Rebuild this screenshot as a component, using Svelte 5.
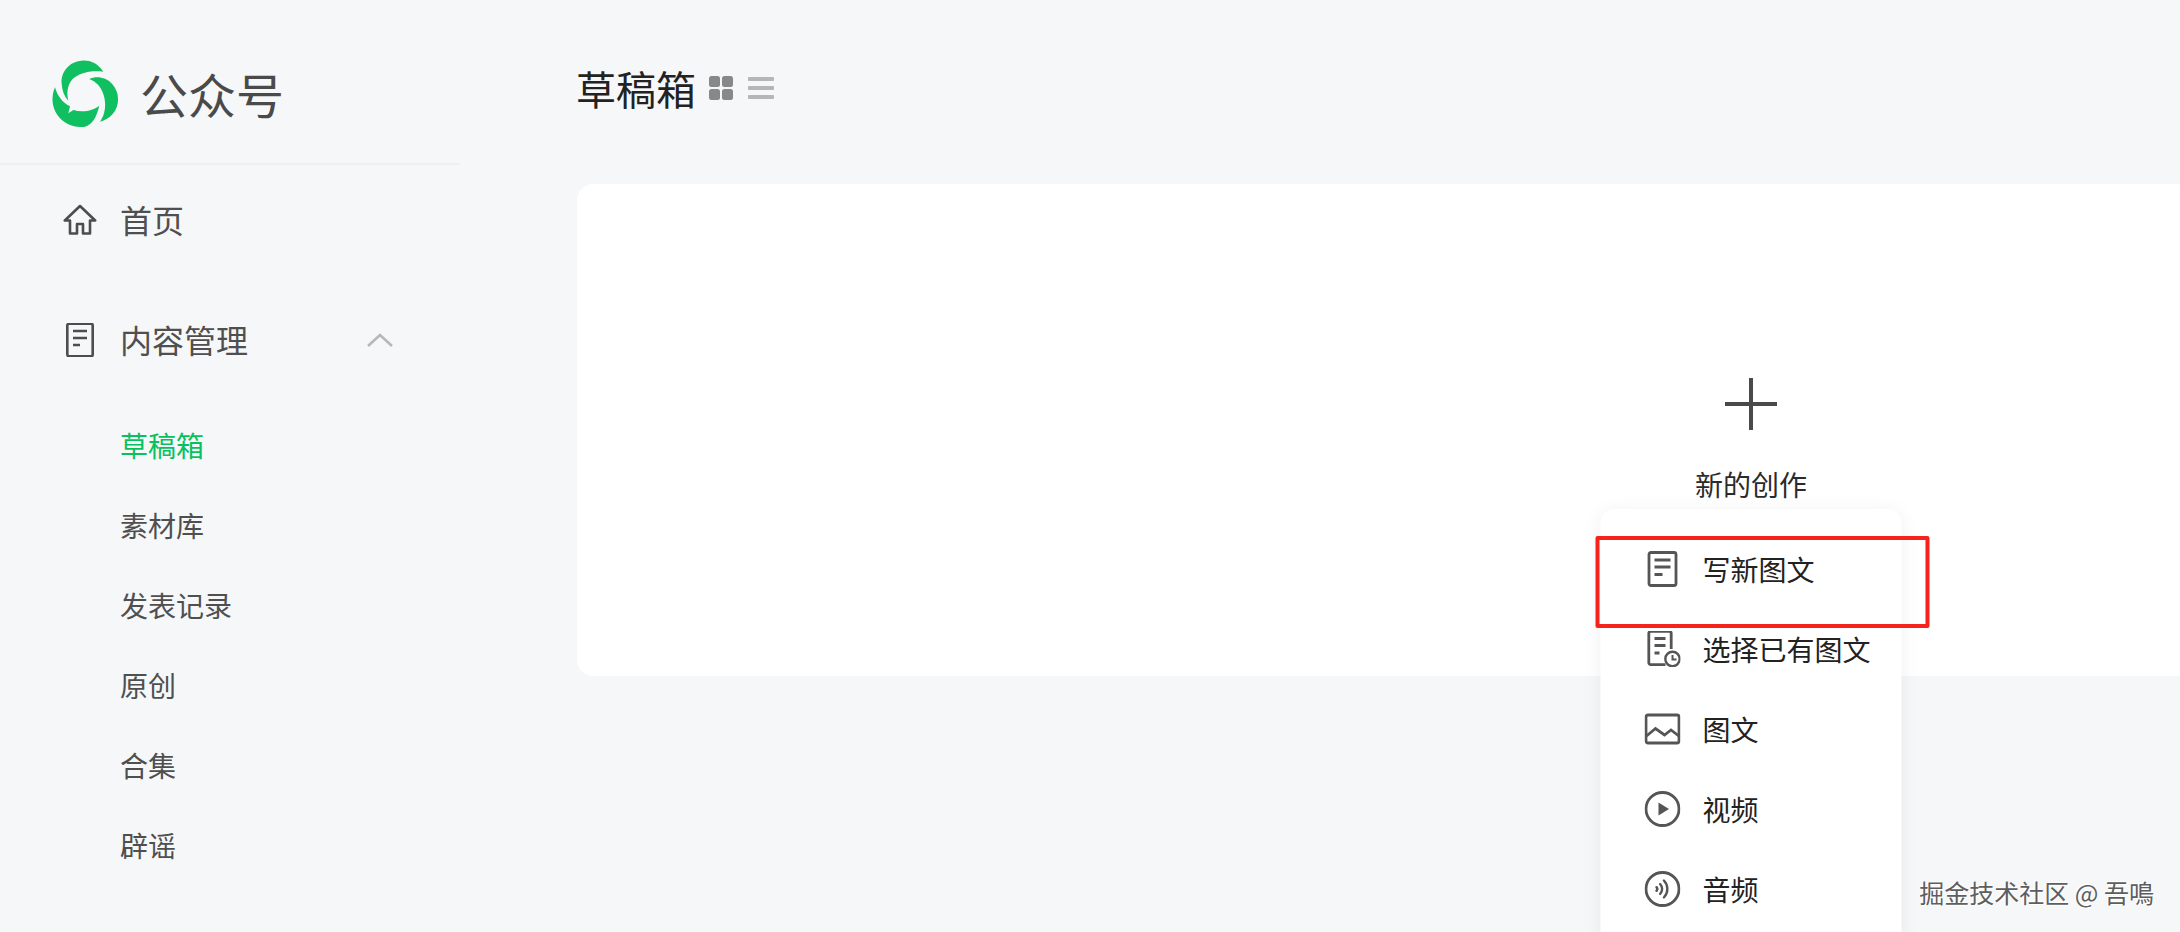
<script>
  const subItems = [
    { label: '草稿箱', active: true },
    { label: '素材库' },
    { label: '发表记录' },
    { label: '原创' },
    { label: '合集' },
    { label: '辟谣' }
  ];

  const menuItems = [
    { label: '写新图文', icon: 'doc' },
    { label: '选择已有图文', icon: 'docClock' },
    { label: '图文', icon: 'image' },
    { label: '视频', icon: 'video' },
    { label: '音频', icon: 'audio' }
  ];
</script>

{#snippet menuIcon(name)}
  <svg class="menu-icon" viewBox="0 0 36 36" fill="none" stroke="#555" stroke-width="2.8">
    {#if name === 'doc'}
      <rect x="4.5" y="1.5" width="27" height="33" rx="2" />
      <path d="M10 9h16M10 16h16M10 23.5h8" />
    {:else if name === 'docClock'}
      <path d="M21 33.7H6.3a2 2 0 0 1-2-2V2.3a2 2 0 0 1 2-2h18.4a2 2 0 0 1 2 2V18" />
      <path d="M10 7.5h11M10 14.5h11M10 22h5" />
      <circle cx="28" cy="28" r="7.2" stroke-width="2.4" />
      <path d="M28 24v4.5h4" stroke-width="2" />
    {:else if name === 'image'}
      <rect x="1.5" y="4" width="33" height="28" rx="2" />
      <path d="M2 25l9-7.5 9 6.5 6.5-5 8.5 6.5" />
    {:else if name === 'video'}
      <circle cx="18" cy="18" r="16.5" />
      <path d="M14 11.5v13l10.5-6.5z" fill="#555" stroke="none" />
    {:else}
      <circle cx="18" cy="18" r="16.5" />
      <path d="M12 16.2a2.6 2.6 0 0 1 0 3.6M15.6 13a7.2 7.2 0 0 1 0 10M19.4 9.5a12.2 12.2 0 0 1 0 17" stroke-width="2.4" stroke-linecap="round" />
    {/if}
  </svg>
{/snippet}

<div class="page">
  <aside class="sidebar">
    <div class="brand">
      <svg class="logo" viewBox="0 0 270 270" fill="#10bf5f">
        <path d="M190 68C172 42 150 33 125 35C88 38 62 68 65 104C66 124 73 142 85 155C78 128 84 100 104 85C128 68 160 64 190 68Z" />
        <path d="M148 90C168 80 198 84 216 104C240 130 240 170 218 195C208 207 195 214 180 218C196 196 200 165 190 135C182 113 170 99 148 90Z" />
        <path d="M45 115C34 140 34 172 52 198C72 226 105 238 135 233C156 228 170 204 178 170C160 184 130 192 100 183L85 193L90 172C66 160 52 140 45 115Z" />
      </svg>
      <span class="brand-name">公众号</span>
    </div>

    <nav>
      <div class="nav-item">
        <svg class="nav-icon" viewBox="0 0 34 34" fill="none" stroke="#4d4d4d" stroke-width="2.6" stroke-linejoin="round">
          <path d="M17 3L1.8 17.5H7V30.5H14V21H20V30.5H27V17.5H32.2Z" />
        </svg>
        <span class="nav-label">首页</span>
      </div>
      <div class="nav-item">
        <svg class="nav-icon" viewBox="0 0 34 34" fill="none" stroke="#4d4d4d" stroke-width="2.6">
          <rect x="4.3" y="0.8" width="25.4" height="32.4" rx="1.6" />
          <path d="M10 8h14M10 15h14M10 22h7" />
        </svg>
        <span class="nav-label">内容管理</span>
        <svg class="chevron" viewBox="0 0 26 14" fill="none" stroke="#b8b8b8" stroke-width="2.6">
          <path d="M1 13L13 2L25 13" />
        </svg>
      </div>
      <ul class="sub-list">
        {#each subItems as item}
          <li class:active={item.active}>{item.label}</li>
        {/each}
      </ul>
    </nav>
  </aside>

  <main>
    <header>
      <h1>草稿箱</h1>
      <svg class="view-icon" viewBox="0 0 24 24" fill="#888">
        <rect width="11" height="11" rx="2.5" />
        <rect x="13" width="11" height="11" rx="2.5" />
        <rect y="13" width="11" height="11" rx="2.5" />
        <rect x="13" y="13" width="11" height="11" rx="2.5" />
      </svg>
      <svg class="view-icon list" viewBox="0 0 26 22" fill="#b6b6b6">
        <rect width="26" height="4" rx="1" />
        <rect y="9" width="26" height="4" rx="1" />
        <rect y="18" width="26" height="4" rx="1" />
      </svg>
    </header>

    <section class="card">
      <div class="create">
        <svg class="plus" viewBox="0 0 52 52" fill="#4a4a4a">
          <rect y="24" width="52" height="4" />
          <rect x="24" width="4" height="52" />
        </svg>
        <div class="create-label">新的创作</div>

        <div class="menu">
          {#each menuItems as item}
            <div class="menu-item">
              {@render menuIcon(item.icon)}
              <span>{item.label}</span>
            </div>
          {/each}
          <div class="highlight"></div>
        </div>
      </div>
    </section>
  </main>

  <div class="watermark">掘金技术社区 @ 吾鳴</div>
</div>

<style>
  :global(body) {
    background: #f6f7f9;
  }

  .page {
    position: relative;
    display: flex;
    height: 932px;
    overflow: hidden;
    background: #f6f7f9;
    font-family: "Noto Sans CJK SC", "Noto Sans", sans-serif;
  }

  .sidebar {
    flex: none;
    width: 460px;
    color: #4f4f4f;
  }

  .brand {
    display: flex;
    align-items: center;
    gap: 10px;
    height: 165px;
    box-sizing: border-box;
    padding: 24px 0 0 40px;
    border-bottom: 2px solid #eff0f2;
  }

  .logo {
    width: 90px;
    height: 90px;
  }

  .brand-name {
    font-size: 48px;
    line-height: 60px;
    color: #4a4a4a;
    margin-bottom: 2px;
  }

  .nav-item {
    display: flex;
    align-items: center;
    box-sizing: border-box;
    height: 112px;
    margin-bottom: 8px;
    padding: 0 0 2px 63px;
    font-size: 32px;
    gap: 23px;
  }

  .nav-label {
    margin-bottom: 3px;
  }

  .nav-icon {
    width: 34px;
    height: 34px;
  }

  .chevron {
    width: 26px;
    height: 14px;
    margin-left: 96px;
  }

  .sub-list {
    list-style: none;
    margin: 8px 0 0;
    padding: 0 0 0 120px;
  }

  .sub-list li {
    height: 80px;
    line-height: 80px;
    font-size: 28px;
  }

  .sub-list li.active {
    color: #07c160;
  }

  main {
    flex: none;
    padding-left: 117px;
  }

  header {
    display: flex;
    align-items: center;
    height: 48px;
    padding-top: 64px;
    margin-bottom: 72px;
  }

  h1 {
    margin: 0 13px 0 -1px;
    font-size: 40px;
    font-weight: 400;
    line-height: 48px;
    color: #222;
  }

  .view-icon {
    width: 24px;
    height: 24px;
  }

  .view-icon.list {
    width: 26px;
    height: 22px;
    margin-left: 15px;
  }

  .card {
    display: flex;
    justify-content: center;
    box-sizing: border-box;
    width: 2348px;
    height: 492px;
    padding-top: 194px;
    border-radius: 16px;
    background: #fff;
  }

  .create {
    position: relative;
    display: flex;
    flex-direction: column;
    align-items: center;
  }

  .plus {
    width: 52px;
    height: 52px;
  }

  .create-label {
    margin-top: 34px;
    font-size: 28px;
    line-height: 40px;
    color: #2b2b2b;
  }

  .menu {
    position: absolute;
    top: 131px;
    left: 50%;
    transform: translateX(-50%);
    box-sizing: border-box;
    width: 301px;
    padding: 20px 0 40px;
    border-radius: 14px;
    background: #fff;
    box-shadow: 0 2px 20px rgba(0, 0, 0, 0.06);
  }

  .menu-item {
    display: flex;
    align-items: center;
    gap: 22px;
    height: 80px;
    padding-left: 44px;
    font-size: 28px;
    color: #222;
    white-space: nowrap;
  }

  .menu-icon {
    flex: none;
    width: 36px;
    height: 36px;
  }

  .highlight {
    position: absolute;
    top: 27px;
    left: -5px;
    box-sizing: border-box;
    width: 334px;
    height: 92px;
    border: 4px solid #f5231b;
    border-radius: 2px;
  }

  .watermark {
    position: absolute;
    right: 26px;
    bottom: 24px;
    font-size: 25px;
    line-height: 32px;
    color: #5e5e5e;
    text-shadow: 1px 1px 1px #fff, -1px -1px 1px #fff;
    white-space: nowrap;
  }
</style>
